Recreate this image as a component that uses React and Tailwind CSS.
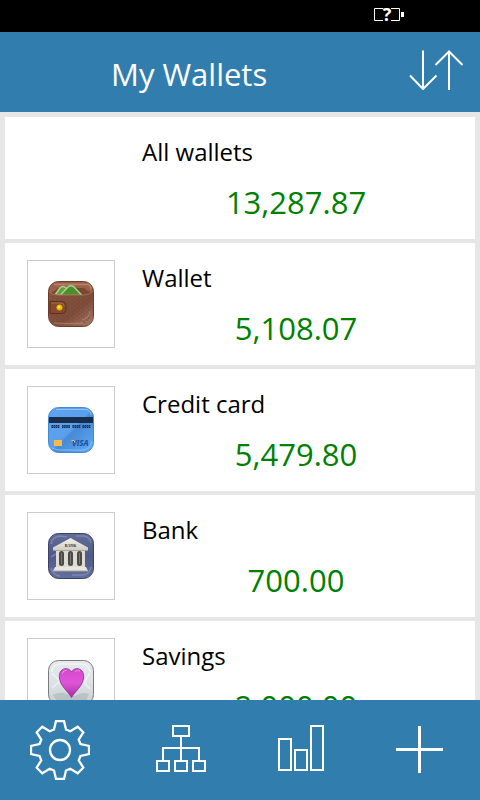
import React from 'react';

const WalletIcon = () => (
  <svg className="h-[46px] w-[46px]" viewBox="0 0 46 46" aria-hidden="true">
    <defs>
      <linearGradient id="leather" x1="0" y1="0" x2="1" y2="1">
        <stop offset="0" stopColor="#87543f" />
        <stop offset="0.6" stopColor="#7e4e3a" />
        <stop offset="1" stopColor="#a67b67" />
      </linearGradient>
      <pattern id="grain" width="5" height="4" patternUnits="userSpaceOnUse">
        <path d="M0 1h2M3 3h2" stroke="#6a3f2d" strokeWidth="1" opacity="0.5" />
      </pattern>
    </defs>
    <rect x="0.5" y="0.5" width="45" height="45" rx="10" fill="#99614a" stroke="#6b3c28" />
    <path d="M6 3.5h34q3 1 3 5" fill="none" stroke="#b78469" strokeWidth="1.5" />
    <path d="M3 12Q8 9 10 7H36q3 3 7 4l-5 4H8z" fill="#7a4733" />
    <path d="M7 14L12 7q3-3 6 0L25 14z" fill="#5f9f3c" stroke="#a9d295" strokeWidth="1.5" />
    <path d="M12 14.500L20 6q3-2.500 6 0L34 14.500z" fill="#4b8f29" stroke="#a9d295" strokeWidth="1.5" />
    <path d="M1 10q3 4 9 4h25q6 0 10-4v25q0 9-9 9.500H10Q1 44 1 35z" fill="url(#leather)" />
    <path d="M3 15h41v20l-6 7H9l-6-8z" fill="url(#grain)" />
    <path d="M1 11q3 3 9 3h25q6 0 10-4" fill="none" stroke="#a56c51" />
    <path d="M2 20.500h12q4 0 4 4v4q0 4-4 4H2z" fill="#84492f" stroke="#5f321f" />
    <path d="M3 22h10q3 0 3 3" fill="none" stroke="#a56c51" />
    <circle cx="11.5" cy="26.5" r="3" fill="#e2b400" />
    <circle cx="11" cy="26" r="1.5" fill="#fff000" />
    <path d="M34 39q7-2 8-9M6 42q14 1 29 0" fill="none" stroke="#c09a88" strokeWidth="1" opacity="0.6" />
  </svg>
);

const CreditCardIcon = () => (
  <svg className="h-[46px] w-[46px]" viewBox="0 0 46 46" aria-hidden="true">
    <defs>
      <linearGradient id="plastic" x1="0" y1="0" x2="1" y2="1">
        <stop offset="0" stopColor="#5ea4f0" />
        <stop offset="0.5" stopColor="#5a9feb" />
        <stop offset="0.54" stopColor="#4789d8" />
        <stop offset="1" stopColor="#62abf3" />
      </linearGradient>
    </defs>
    <rect x="0.5" y="0.5" width="45" height="45" rx="10" fill="url(#plastic)" stroke="#4588ce" />
    <path d="M8 2.5h30q5 1 5 6" fill="none" stroke="#8ac4fa" />
    <rect x="1" y="10" width="44" height="6" fill="#182d4b" />
    <path d="M3.500 18.500h8M14 18.500h8M24.500 18.500h8M34.500 18.500h8M3.500 20.500h8M14 20.500h8M24.500 20.500h8M34.500 20.500h8" stroke="#15294a" strokeWidth="1" strokeDasharray="1.6 0.5" />
    <path d="M3.500 19.500h8M14 19.500h8M24.500 19.500h8M34.500 19.500h8" stroke="#15294a" strokeWidth="1" strokeDasharray="0.6 0.4" />
    <rect x="6" y="33" width="8" height="6" fill="#f8bb43" />
    <text x="24" y="39" fontFamily="'Open Sans', sans-serif" fontSize="8" fontStyle="italic" fontWeight="700" fill="#174f9c">VISA</text>
    <path d="M23.500 33.500h2.500l1 2" fill="none" stroke="#f8bb43" />
    <path d="M4 41q4 2 8 2h22q8 0 10-9" fill="none" stroke="#8dc7fb" opacity="0.8" />
  </svg>
);

const BankIcon = () => (
  <svg className="h-[46px] w-[46px]" viewBox="0 0 46 46" aria-hidden="true">
    <defs>
      <linearGradient id="slate" x1="0" y1="0" x2="0" y2="1">
        <stop offset="0" stopColor="#626d97" />
        <stop offset="0.5" stopColor="#4f5a8a" />
        <stop offset="1" stopColor="#636f9d" />
      </linearGradient>
      <linearGradient id="stone" x1="0" y1="0" x2="0" y2="1">
        <stop offset="0" stopColor="#f3f1ea" />
        <stop offset="1" stopColor="#cfccc3" />
      </linearGradient>
    </defs>
    <rect x="0.5" y="0.5" width="45" height="45" rx="10" fill="url(#slate)" stroke="#39436a" />
    <path d="M3 11q1-7 9-8l7 1M28 3h8q6 1 7 7M3 24l5-3M3 35q2 7 9 8M24 42h11q7-1 8-8" fill="none" stroke="#8f99bf" strokeWidth="1.5" opacity="0.6" />
    <path d="M22.500 5L5 14.500V17.500H40V14.500z" fill="url(#stone)" />
    <path d="M8 17h29v17H8z" fill="#dedbd2" />
    <path d="M7 34h31l2 4H5z" fill="#e9e6dd" />
    <path d="M5 38h35M7 17.500h31" stroke="#a9a69d" />
    <rect x="11" y="18" width="5" height="15" rx="2.5" fill="#4a4b49" />
    <rect x="20" y="18" width="5" height="15" rx="2.5" fill="#4a4b49" />
    <rect x="29" y="18" width="5" height="15" rx="2.5" fill="#4a4b49" />
    <path d="M13.500 20v11M22.500 20v11M31.500 20v11" stroke="#777873" />
    <text x="22.5" y="13.5" textAnchor="middle" fontFamily="'Liberation Serif', serif" fontSize="4" fontWeight="700" fill="#25241f">BANK</text>
  </svg>
);

const SavingsIcon = () => (
  <svg className="h-[46px] w-[46px]" viewBox="0 0 46 46" aria-hidden="true">
    <defs>
      <linearGradient id="glass" x1="0" y1="0" x2="0" y2="1">
        <stop offset="0" stopColor="#e6eaec" />
        <stop offset="0.5" stopColor="#dde2e5" />
        <stop offset="1" stopColor="#c8ced2" />
      </linearGradient>
      <linearGradient id="heart" x1="0" y1="0" x2="0" y2="1">
        <stop offset="0" stopColor="#d548cf" />
        <stop offset="0.5" stopColor="#de55d8" />
        <stop offset="1" stopColor="#a52ca3" />
      </linearGradient>
    </defs>
    <rect x="0.5" y="1.5" width="45" height="44" rx="10" fill="url(#glass)" stroke="#767a7c" />
    <path d="M4 13q0-7 8-8h22q7 1 8 8M4 14l8 8-8 7M42 14l-6 10 6 6" fill="none" stroke="#fff" strokeWidth="1.5" opacity="0.5" />
    <path d="M5 36q7-4 14-1l8 2q8-5 14-2l-3 7H9z" fill="#aeb5ba" opacity="0.6" />
    <path d="M23.500 38.500C21 34 17.500 31.500 14 26C11.500 22 11 18 11.500 15.500C12.500 9 20.500 7.500 23.500 13C26.500 7.500 34.500 9 35.500 15.500C36 18 35.500 22 33 26C29.500 31.500 26 34 23.500 38.500z" fill="url(#heart)" stroke="#9a3d9b" />
    <path d="M14 15q1-4 5-4M27 13q2-3 5-1" fill="none" stroke="#ee92e8" />
  </svg>
);

const wallets = [
  { name: 'All wallets', amount: '13,287.87' },
  { name: 'Wallet', amount: '5,108.07', icon: WalletIcon },
  { name: 'Credit card', amount: '5,479.80', icon: CreditCardIcon },
  { name: 'Bank', amount: '700.00', icon: BankIcon },
  { name: 'Savings', amount: '2,000.00', icon: SavingsIcon },
];

const StatusBar = () => (
  <div className="flex h-8 shrink-0 items-center justify-end bg-black pr-[76px]">
    <svg className="h-7 w-[30px]" viewBox="0 -5 30 28" role="img" aria-label="Battery status unknown">
      <path d="M9 0.500H0.500v12H9M17 0.500h8.500v12H17" fill="none" stroke="#fff" transform="translate(0 1)" />
      <path d="M27 5h3v5h-3z" fill="#fff" />
      <text x="13" y="14" textAnchor="middle" fontFamily="'Open Sans', sans-serif" fontSize="18" fontWeight="700" fill="#fff">?</text>
    </svg>
  </div>
);

const Header = () => (
  <header className="flex h-20 shrink-0 items-center justify-between bg-[#317dae] pr-4 pl-[111px] text-white">
    <h1 className="pt-1 text-[31px] leading-10">My Wallets</h1>
    <button type="button" aria-label="Sort wallets" className="pb-1">
      <svg className="h-10 w-[55px]" viewBox="0 0 55 40" fill="none" stroke="currentColor" strokeWidth="2">
        <path d="M14 0.500V39M1 25.500L14 39L27.500 25.500" />
        <path d="M40 40V1.500M26.500 15L40 1.500L53.500 15" />
      </svg>
    </button>
  </header>
);

const WalletRow = ({ wallet }) => {
  const Icon = wallet.icon;

  return (
    <li>
      <button type="button" className="flex h-[122px] w-full items-start gap-[27px] bg-white pt-[17px] pr-[25px] pl-[22px] text-left">
        {Icon ? (
          <span className="flex size-[88px] shrink-0 items-center justify-center border border-[#cccccc]">
            <Icon />
          </span>
        ) : (
          <span className="size-[88px] shrink-0" />
        )}
        <span className="flex flex-1 flex-col">
          <span className="text-[24px] leading-9 text-black">{wallet.name}</span>
          <span className="pt-3 text-center text-[31px] leading-10 text-[#008000]">{wallet.amount}</span>
        </span>
      </button>
    </li>
  );
};

const Toolbar = () => (
  <nav className="grid h-[100px] shrink-0 grid-cols-4 bg-[#317dae] text-white">
    <button type="button" aria-label="Settings" className="flex items-center justify-center">
      <svg className="size-[60px]" viewBox="0 0 60 60" fill="none" stroke="currentColor" strokeWidth="2.3">
        <path d="M24 9.500L26 1H34L36 9.500L40.300 11.300L47.700 6.700L53.300 12.300L48.700 19.700L50.500 24L59 26V34L50.500 36L48.700 40.300L53.300 47.700L47.700 53.300L40.300 48.700L36 50.500L34 59H26L24 50.500L19.700 48.700L12.300 53.300L6.700 47.700L11.300 40.300L9.500 36L1 34V26L9.500 24L11.300 19.700L6.700 12.300L12.300 6.700L19.700 11.300z" />
        <circle cx="30" cy="30" r="10" />
      </svg>
    </button>
    <button type="button" aria-label="Categories" className="flex items-center justify-center">
      <svg className="size-[60px]" viewBox="0 0 60 60" fill="none" stroke="currentColor" strokeWidth="2">
        <path d="M23 6h16v10H23zM31 17v23M13 40V28h36v12" />
        <path d="M7 41h12v10H7zM25 41h12v10H25zM43 41h12v10H43z" />
      </svg>
    </button>
    <button type="button" aria-label="Reports" className="flex items-center justify-center">
      <svg className="size-[60px]" viewBox="0 0 60 60" fill="none" stroke="currentColor" strokeWidth="2">
        <path d="M9 19h12v31H9zM25 30h12v20H25zM41 6h12v44H41z" />
      </svg>
    </button>
    <button type="button" aria-label="Add wallet" className="flex items-center justify-center">
      <svg className="size-[60px]" viewBox="0 0 60 60" fill="none" stroke="currentColor" strokeWidth="3">
        <path d="M29.500 6v47M6 29.500h47" />
      </svg>
    </button>
  </nav>
);

const App = () => {
  return (
    <div className="flex h-screen flex-col bg-[#e6e6e6] font-['Open_Sans','Noto_Sans',sans-serif]">
      <StatusBar />
      <Header />
      <main className="min-h-0 flex-1 overflow-y-auto p-[5px] [scrollbar-width:none]">
        <ul className="flex flex-col gap-1">
          {wallets.map((wallet) => (
            <WalletRow key={wallet.name} wallet={wallet} />
          ))}
        </ul>
      </main>
      <Toolbar />
    </div>
  );
};

export default App;
